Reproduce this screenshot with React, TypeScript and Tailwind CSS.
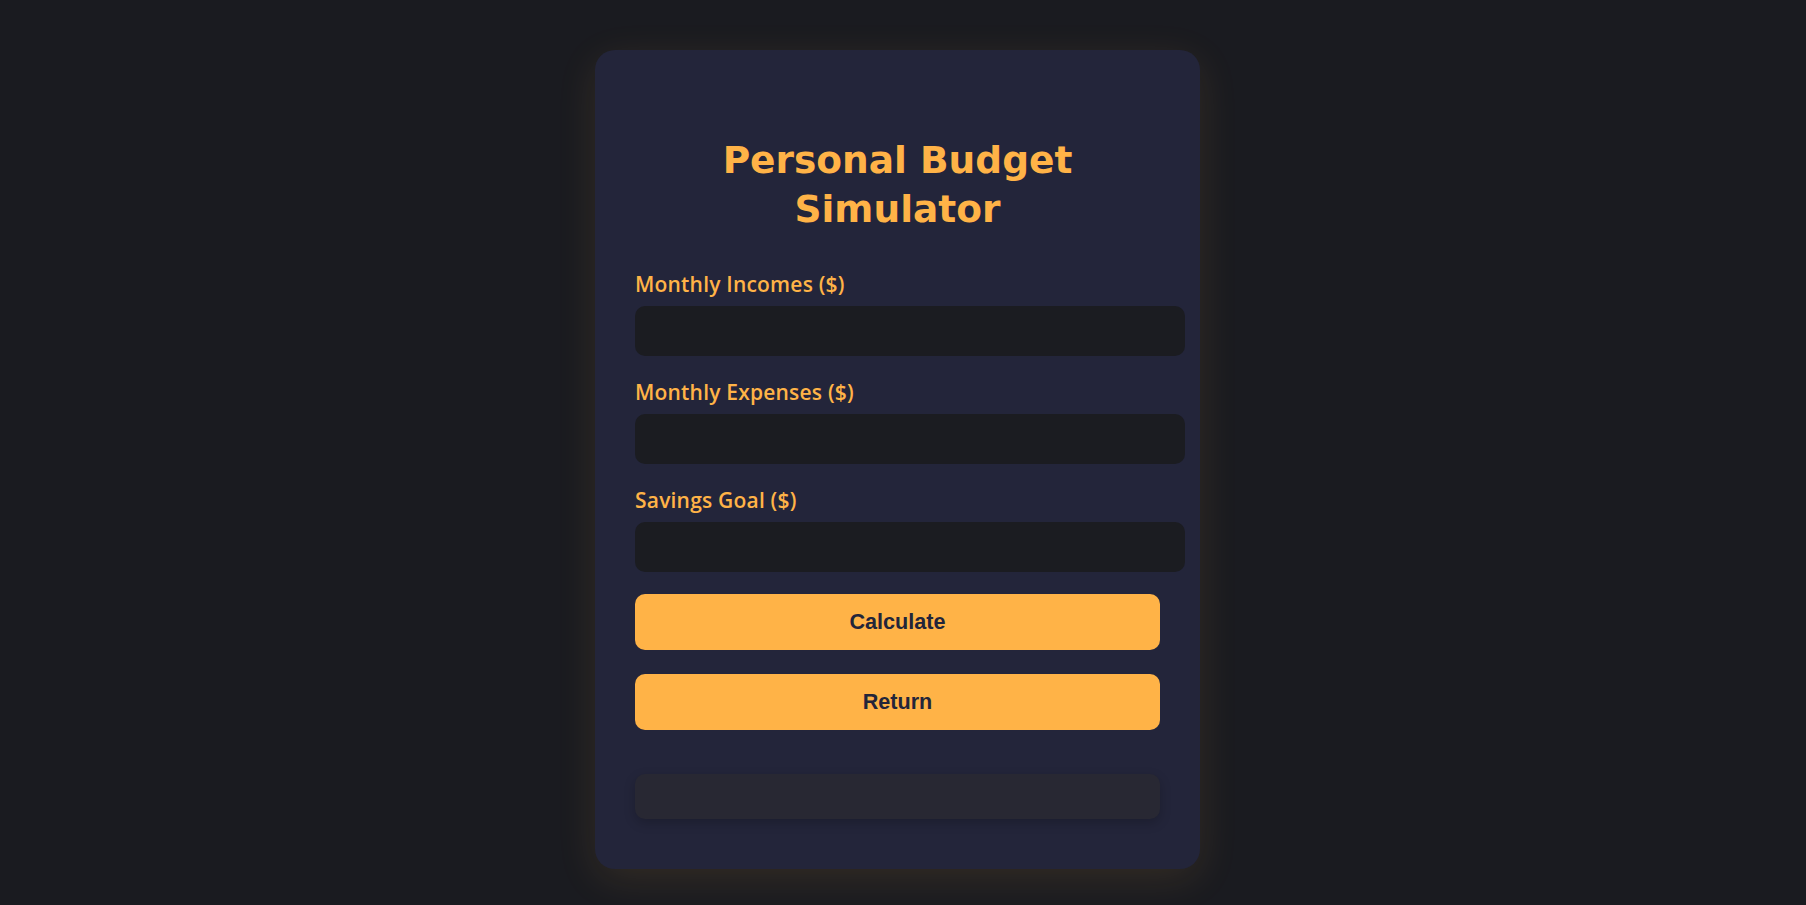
import { useState } from 'react';

const fields = [
  { id: 'income', label: 'Monthly Incomes ($)' },
  { id: 'expenses', label: 'Monthly Expenses ($)' },
  { id: 'goal', label: 'Savings Goal ($)' },
];

const App = () => {
  const [values, setValues] = useState<Record<string, string>>({});
  const [result, setResult] = useState('');

  const calculate = () => {
    const income = parseFloat(values.income || '0');
    const expenses = parseFloat(values.expenses || '0');
    const goal = parseFloat(values.goal || '0');
    const left = income - expenses;
    if (!income && !expenses && !goal) return setResult('');
    setResult(left >= goal ? `You can save $${left.toFixed(2)} per month.` : `You are $${(goal - left).toFixed(2)} short of your goal.`);
  };

  return (
    <div className="min-h-screen bg-[#1a1b20] flex justify-center pt-[50px] pb-9">
      <div className="w-[605px] mr-[11px] self-start rounded-[20px] bg-[#23253a] px-10 pt-10 pb-[50px] shadow-[0_10px_40px_rgba(255,179,71,0.11)]">
        <h1 className="mt-[46px] mb-[37px] text-center text-[37.5px] leading-[49px] font-bold text-[#ffb347] font-['DejaVu_Sans',sans-serif]">
          Personal Budget Simulator
        </h1>

        {fields.map((f, i) => (
          <div key={f.id} className={i === fields.length - 1 ? 'mb-[22px]' : 'mb-[23px]'}>
            <label
              htmlFor={f.id}
              className="block mb-[9px] text-[21px] leading-[26px] font-semibold tracking-[0.2px] text-[#ffb347] font-['Open_Sans',sans-serif]"
            >
              {f.label}
            </label>
            <input
              id={f.id}
              type="number"
              value={values[f.id] || ''}
              onChange={(e) => setValues({ ...values, [f.id]: e.target.value })}
              className="block w-[550px] h-[50px] rounded-[10px] bg-[#1b1c21] px-3 text-[18px] text-white outline-none font-['Open_Sans',sans-serif]"
            />
          </div>
        ))}

        <button
          onClick={calculate}
          className="block w-full h-14 rounded-[10px] bg-[#ffb347] text-[21.6px] font-bold text-[#23253a] font-['Liberation_Sans',Arial,sans-serif]"
        >
          Calculate
        </button>
        <button
          onClick={() => {
            setValues({});
            setResult('');
          }}
          className="block w-full h-14 mt-6 rounded-[10px] bg-[#ffb347] text-[21.6px] font-bold text-[#23253a] font-['Liberation_Sans',Arial,sans-serif]"
        >
          Return
        </button>

        <div className="mt-[44px] h-[45px] rounded-[10px] bg-[#282833] shadow-[0_4px_12px_rgba(0,0,0,0.2)] flex items-center justify-center text-[18px] text-[#ffb347] font-['Open_Sans',sans-serif]">
          {result}
        </div>
      </div>
    </div>
  );
};

export default App;
